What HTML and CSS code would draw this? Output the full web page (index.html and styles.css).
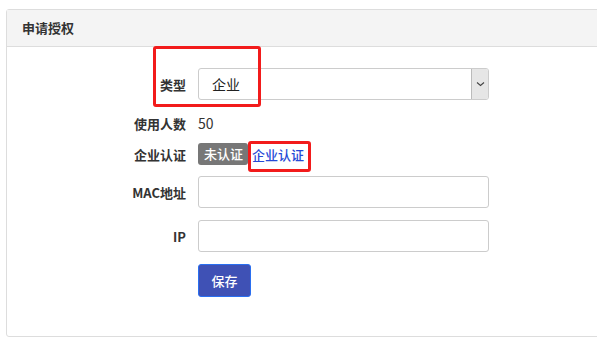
FILE: index.html
```html
<!DOCTYPE html>
<html lang="zh">
<head>
    <meta charset="UTF-8">
    <title>申请授权</title>
    <link rel="stylesheet" href="styles.css">
</head>
<body>
    <div class="panel">
        <div class="panel-heading">申请授权</div>
        <div class="panel-body">
            <div class="row row-select">
                <label class="label">类型</label>
                <div class="select">
                    <span class="select-value">企业</span>
                    <span class="select-arrow">
                        <svg width="9" height="6" viewBox="0 0 9 6"><path d="M1 1.5 L4.5 4.5 L8 1.5" fill="none" stroke="#444" stroke-width="1.1"/></svg>
                    </span>
                </div>
                <span class="mark mark-type"></span>
            </div>
            <div class="row row-text">
                <label class="label">使用人数</label>
                <span class="value">50</span>
            </div>
            <div class="row row-cert">
                <label class="label">企业认证</label>
                <span class="badge">未认证</span>
                <a class="cert-link" href="#">企业认证</a>
                <span class="mark mark-cert"></span>
            </div>
            <div class="row row-input">
                <label class="label">MAC地址</label>
                <input class="input" type="text">
            </div>
            <div class="row row-input">
                <label class="label">IP</label>
                <input class="input" type="text">
            </div>
            <div class="row row-btn">
                <span class="label"></span>
                <button class="btn-save" type="button">保存</button>
            </div>
        </div>
    </div>
</body>
</html>
```

FILE: styles.css
```css
body {
    margin: 0;
    padding: 9px 0 0 6px;
    overflow: hidden;
    background-color: #fff;
    font-family: "Noto Sans CJK SC", "Noto Sans", sans-serif;
    font-size: 13px;
    color: #333;
}
.panel {
    width: 600px;
    height: 328px;
    border: 1px solid #ddd;
    border-radius: 3px;
    box-sizing: border-box;
    position: relative;
}
.panel-heading {
    height: 36px;
    line-height: 36px;
    padding-left: 15px;
    background-color: #f4f4f4;
    border-bottom: 1px solid #ddd;
    font-weight: bold;
    font-size: 13px;
    color: #333;
}
.panel-body {
    padding-top: 21px;
    display: flex;
    flex-direction: column;
}
.row {
    display: flex;
    align-items: center;
    position: relative;
}
.label {
    width: 191px;
    padding-right: 12px;
    box-sizing: border-box;
    text-align: right;
    font-weight: bold;
    color: #333;
    flex-shrink: 0;
}
.row-select {
    height: 32px;
}
.select {
    width: 291px;
    height: 32px;
    box-sizing: border-box;
    border: 1px solid #ccc;
    border-radius: 3px;
    display: flex;
    align-items: center;
    justify-content: space-between;
    overflow: hidden;
}
.select-value {
    padding-left: 13px;
    font-size: 14px;
    color: #222;
}
.select-arrow {
    width: 16px;
    height: 100%;
    background-color: #e6e6e6;
    border-left: 1px solid #bbb;
    display: flex;
    align-items: center;
    justify-content: center;
}
.row-text {
    height: 20px;
    margin-top: 13px;
}
.value {
    font-size: 14px;
    color: #333;
}
.row-cert {
    height: 22px;
    margin-top: 10px;
}
.badge {
    background-color: #777;
    color: #fff;
    font-size: 13px;
    font-weight: 500;
    height: 22px;
    line-height: 22px;
    padding: 0 5px 0 6px;
    border-radius: 3px;
}
.cert-link {
    margin-left: 4px;
    color: #2549d6;
    text-decoration: none;
    font-size: 13px;
    font-weight: 500;
}
.row-input {
    margin-top: 11px;
}
.row-input + .row-input {
    margin-top: 12px;
}
.input {
    width: 291px;
    height: 32px;
    box-sizing: border-box;
    border: 1px solid #ccc;
    border-radius: 3px;
    margin: 0;
}
.row-btn {
    margin-top: 12px;
}
.btn-save {
    width: 53px;
    height: 33px;
    background-color: #3f51b5;
    border: 1px solid #2a6ff0;
    border-radius: 3px;
    color: #fff;
    font-family: inherit;
    font-size: 13px;
    font-weight: 500;
    cursor: pointer;
}
.mark {
    position: absolute;
    border: 3px solid #f21b1b;
    border-radius: 3px;
    box-sizing: border-box;
}
.mark-type {
    left: 146px;
    top: -22px;
    width: 108px;
    height: 61px;
}
.mark-cert {
    left: 241px;
    top: -2px;
    width: 63px;
    height: 31px;
}
```
